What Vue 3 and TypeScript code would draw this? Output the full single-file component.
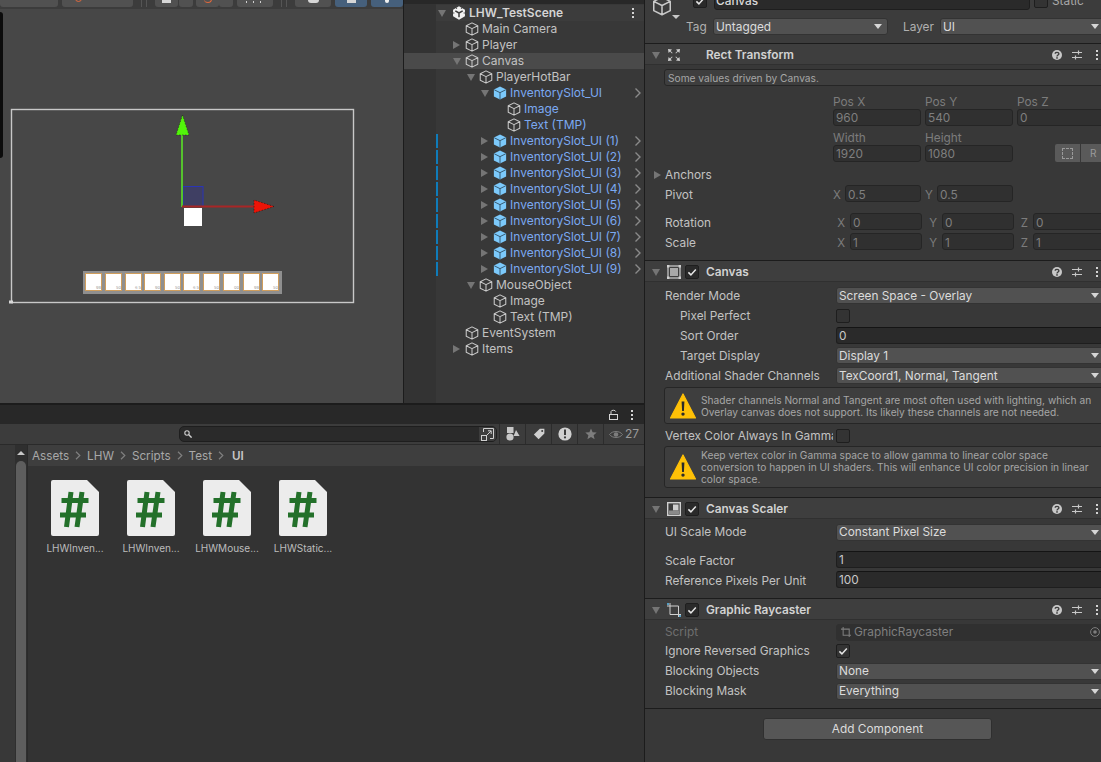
<script setup lang="ts">
interface TreeRow {
  label: string;
  depth: number;
  arrow?: 'down' | 'right';
  prefab?: boolean;
  blue?: boolean;
  bar?: boolean;
  more?: boolean;
  hover?: boolean;
}

const slotRow = (n: number): TreeRow => ({
  label: `InventorySlot_UI (${n})`,
  depth: 2,
  arrow: 'right',
  prefab: true,
  blue: true,
  bar: true,
  more: true,
});

const tree: TreeRow[] = [
  { label: 'Main Camera', depth: 0 },
  { label: 'Player', depth: 0, arrow: 'right' },
  { label: 'Canvas', depth: 0, arrow: 'down', hover: true },
  { label: 'PlayerHotBar', depth: 1, arrow: 'down' },
  { label: 'InventorySlot_UI', depth: 2, arrow: 'down', prefab: true, blue: true, more: true },
  { label: 'Image', depth: 3, blue: true },
  { label: 'Text (TMP)', depth: 3, blue: true },
  ...[1, 2, 3, 4, 5, 6, 7, 8, 9].map(slotRow),
  { label: 'MouseObject', depth: 1, arrow: 'down' },
  { label: 'Image', depth: 2 },
  { label: 'Text (TMP)', depth: 2 },
  { label: 'EventSystem', depth: 0 },
  { label: 'Items', depth: 0, arrow: 'right' },
];

const hotbar = ['99', '50', '6 5', '90', '50', '6 5', '50', '00', '99', '50'];
const slotGaps = [85, 105, 125, 144, 164, 183, 203, 223, 243, 262];
const files = ['LHWInven...', 'LHWInven...', 'LHWMouse...', 'LHWStatic...'];
const crumbs = ['Assets', 'LHW', 'Scripts', 'Test'];
</script>

<template>
  <div class="editor">
    <svg class="defs" width="0" height="0">
      <symbol id="cube" viewBox="0 0 16 16">
        <path d="M8 1 14.6 4.3V11.7L8 15 1.4 11.7V4.3Z M1.4 4.3 8 7.6 14.6 4.3 M8 7.6V15" fill="none" stroke="#c9c9c9" stroke-width="1.2" stroke-linejoin="round" />
      </symbol>
      <symbol id="prefab" viewBox="0 0 16 16">
        <path d="M8 .6 15 4.1V11.9L8 15.4 1 11.9V4.1Z" fill="#7cc9fb" />
        <path d="M1.4 4.3 8 7.6 14.6 4.3 M8 7.6V15" fill="none" stroke="#2d4a5e" stroke-width="1" />
      </symbol>
      <symbol id="warn" viewBox="0 0 26 26">
        <path d="M13 1 25.5 25H.5Z" fill="#ffc107" stroke="#ffc107" stroke-width="1.2" stroke-linejoin="round" />
        <path d="M11.6 8.5h2.8l-.5 9.5h-1.8Z M13 19.4a1.7 1.7 0 1 1 0 3.4 1.7 1.7 0 0 1 0-3.4Z" fill="#2b2b2b" />
      </symbol>
      <symbol id="ask" viewBox="0 0 12 12">
        <circle cx="6" cy="6" r="5" fill="#c8c8c8" />
        <path d="M4.2 4.8C4.2 2.8 7.9 2.9 7.9 4.8 7.9 6 6 6 6 7.5" fill="none" stroke="#3e3e3e" stroke-width="1.4" />
        <rect x="5.2" y="8.2" width="1.6" height="1.5" fill="#3e3e3e" />
      </symbol>
      <symbol id="bang" viewBox="0 0 14 14">
        <circle cx="7" cy="7" r="6.6" fill="#d0d0d0" />
        <path d="M7 2.6V8" stroke="#3c3c3c" stroke-width="2" />
        <circle cx="7" cy="10.4" r="1.1" fill="#3c3c3c" />
      </symbol>
      <symbol id="sliders" viewBox="0 0 12 12">
        <path d="M1 3.5H11 M1 8.5H11 M7.5 1.5V5.5 M4.5 6.5V10.5" stroke="#c8c8c8" stroke-width="1.2" />
      </symbol>
      <symbol id="check" viewBox="0 0 14 14">
        <path d="M3.4 7.4 5.9 9.9 10.8 4.4" fill="none" stroke="#e6e6e6" stroke-width="1.5" />
      </symbol>
    </svg>

    <div class="left">
      <div class="top">
        <section class="scene">
          <div class="scene-bar">
            <span class="tb w58 txt">Center</span>
            <span class="tb w71 gap4 txt">
              <i class="local-ic"></i>Local
            </span>
            <span class="grip"></span>
            <span class="tb w23"><i class="mark m-wide"></i></span><span class="tb w14 gap1"></span>
            <span class="tb w23 gap3"><i class="mark m-arc"></i></span><span class="tb w14"></span>
            <span class="tb w36 gap4"><i class="mark m-ticks"></i></span>
            <span class="grip"></span>
            <span class="tb w36"><i class="mark m-orb"></i></span>
            <span class="tb w32 gap4 on"><i class="mark m-wide"></i></span>
            <span class="tb w32 gap4 on"><i class="mark m-dot"></i></span>
          </div>
          <div class="viewport">
            <span class="sliver"></span>
            <svg class="gizmo" width="403" height="394" viewBox="0 9 403 394">
              <rect x="11.5" y="109.5" width="342" height="193" fill="none" stroke="#c8c8c8" stroke-width="1.4" />
              <rect x="9" y="300.5" width="4" height="3" fill="#d8d8d8" />
              <rect x="184" y="208" width="18" height="18" fill="#fff" />
              <rect x="183" y="186.5" width="20" height="20" fill="#3f3f63" stroke="#2a35b5" />
              <path d="M182 207V134" stroke="#55c22d" stroke-width="2" />
              <path d="M182.5 115 176 135H189Z" fill="#52f50a" stroke="#1d3d0a" stroke-width=".6" stroke-dasharray="1.5 1.5" />
              <path d="M182 206.5H256" stroke="#a82626" stroke-width="2" />
              <path d="M274 206.5 254 200V213Z" fill="#ec1407" stroke="#3a0a06" stroke-width=".6" stroke-dasharray="1.5 1.5" />
            </svg>
            <div class="hotbar">
              <div v-for="(t, i) in hotbar" :key="i" class="slot" :style="{ left: slotGaps[i] - 83 + 'px' }">
                <span>{{ t }}</span>
              </div>
            </div>
          </div>
        </section>

        <section class="hierarchy">
          <div class="tree-head">
            <i class="tri down head-tri"></i>
            <svg class="logo" width="14" height="14" viewBox="0 0 16 16">
              <path d="M8 .4 14.8 4.2V11.8L8 15.6 1.2 11.8V4.2Z" fill="#f2f2f2" />
              <path d="M8 8 8 12.8 M8 8 3.8 5.6 M8 8 12.2 5.6" stroke="#3c3c3c" stroke-width="1.7" fill="none" />
              <path d="M.6 8H2.8 M13.2 8H15.4 M4.4 1.6 5.6 3.4 M11.6 1.6 10.4 3.4" stroke="#3c3c3c" stroke-width="1" fill="none" />
            </svg>
            <span class="scene-name">LHW_TestScene</span>
            <span class="dots"><b></b><b></b><b></b></span>
          </div>
          <div
            v-for="(r, i) in tree"
            :key="i"
            class="row"
            :class="{ hover: r.hover }"
          >
            <span class="bar" :class="{ lit: r.bar }"></span>
            <span class="indent" :style="{ width: 13 + r.depth * 14 + 'px' }"></span>
            <span class="slot-arrow"><i v-if="r.arrow" class="tri" :class="r.arrow"></i></span>
            <svg class="node-ic" width="14" height="14"><use :href="r.prefab ? '#prefab' : '#cube'" /></svg>
            <span class="node" :class="{ blue: r.blue }">{{ r.label }}</span>
            <svg v-if="r.more" class="more" width="8" height="12" viewBox="0 0 8 12">
              <path d="M1.5 1.5 6 6 1.5 10.5" fill="none" stroke="#8a8a8a" stroke-width="1.4" />
            </svg>
          </div>
        </section>
      </div>

      <section class="project">
        <div class="project-tabs">
          <svg width="9" height="11" viewBox="0 0 9 11">
            <path d="M2 5V2.6C2 .8 6.6 .8 6.8 2.6" fill="none" stroke="#d6d6d6" />
            <rect x=".5" y="5.5" width="8" height="5" fill="none" stroke="#d6d6d6" />
          </svg>
          <span class="dots"><b></b><b></b><b></b></span>
        </div>
        <div class="project-tools">
          <div class="search">
            <svg width="8" height="8" viewBox="0 0 8 8">
              <circle cx="3" cy="3" r="2.2" fill="none" stroke="#d0d0d0" stroke-width="1.1" />
              <path d="M4.8 4.8 7.6 7.6" stroke="#d0d0d0" stroke-width="1.4" />
            </svg>
            <span class="search-btn">
              <svg width="14" height="14" viewBox="0 0 14 14">
                <path d="M2.5 5V1.5H12.5V11.5H9" fill="none" stroke="#cfcfcf" />
                <rect x=".5" y="8.5" width="5" height="5" fill="none" stroke="#cfcfcf" />
                <path d="M6 8 10 4M7 3.8H10.2V7" fill="none" stroke="#cfcfcf" />
              </svg>
            </span>
          </div>
          <span class="pt-btn">
            <svg width="14" height="14" viewBox="0 0 14 14">
              <rect x="1" y="0" width="6.5" height="6" fill="#c8c8c8" />
              <circle cx="4" cy="10" r="3.6" fill="#c8c8c8" />
              <path d="M10 3 13.6 9H7.6Z" fill="#c8c8c8" />
            </svg>
          </span>
          <span class="pt-btn">
            <svg width="12" height="12" viewBox="0 0 12 12">
              <path d="M6.8 .8H11.4V5.4L5.6 11.2 .9 6.6Z" fill="#cfcfcf" />
              <circle cx="9.2" cy="2.9" r="1" fill="#3c3c3c" />
            </svg>
          </span>
          <span class="pt-btn">
            <svg width="14" height="14"><use href="#bang" /></svg>
          </span>
          <span class="pt-btn">
            <svg width="12" height="12" viewBox="0 0 12 12">
              <path d="M6 .4 7.6 4.2 11.7 4.5 8.6 7.2 9.6 11.3 6 9.1 2.4 11.3 3.4 7.2 .3 4.5 4.4 4.2Z" fill="#7d7d7d" />
            </svg>
          </span>
          <span class="pt-eye">
            <svg width="14" height="9" viewBox="0 0 14 9">
              <path d="M.5 4.5C3.5.5 10.5.5 13.5 4.5 10.5 8.5 3.5 8.5.5 4.5Z" fill="none" stroke="#7d7d7d" />
              <circle cx="7" cy="4.5" r="2.3" fill="#7d7d7d" />
            </svg>
            27
          </span>
        </div>
        <div class="project-body">
          <div class="folders">
            <div class="scroll">
              <i class="scroll-up"></i>
              <span class="scroll-thumb"></span>
            </div>
          </div>
          <div class="assets">
            <div class="crumbs">
              <template v-for="c in crumbs" :key="c">
                <span>{{ c }}</span>
                <svg width="6" height="9" viewBox="0 0 6 9">
                  <path d="M1 .8 4.8 4.5 1 8.2" fill="none" stroke="#7f7f7f" stroke-width="1.2" />
                </svg>
              </template>
              <b>UI</b>
            </div>
            <div class="file-grid">
              <div v-for="(f, i) in files" :key="i" class="file">
                <svg width="48" height="56" viewBox="0 0 48 56">
                  <path d="M2 0H36L48 12V54a2 2 0 0 1-2 2H2a2 2 0 0 1-2-2V2A2 2 0 0 1 2 0Z" fill="#ececec" />
                  <path d="M20 12 15.5 47 M31 12 26 47 M10.5 20.5H37.5 M9 35H35" stroke="#23702a" stroke-width="5" fill="none" />
                </svg>
                <span>{{ f }}</span>
              </div>
            </div>
          </div>
        </div>
      </section>
    </div>

    <aside class="inspector">
      <div class="obj-head">
        <div class="name-row">
          <span class="check"><svg width="14" height="14"><use href="#check" /></svg></span>
          <span class="name-field">Canvas</span>
          <span class="check plain"></span>
          <span class="static">Static</span>
        </div>
        <svg class="obj-cube" width="20" height="20"><use href="#cube" /></svg>
        <i class="tri down obj-tri"></i>
        <div class="tag-row">
          <label>Tag</label>
          <span class="drop tag">Untagged<i class="tri down white"></i></span>
          <label class="layer">Layer</label>
          <span class="drop layer-drop">UI<i class="tri down white"></i></span>
        </div>
      </div>

      <div class="section rect">
        <div class="comp-head">
          <i class="tri down"></i>
          <svg class="comp-ic" width="14" height="14" viewBox="0 0 14 14">
            <path d="M1 1 5 1.6 3.6 3 5.6 5 5 5.6 3 3.6 1.6 5Z M13 1 12.4 5 11 3.6 9 5.6 8.4 5 10.4 3 9 1.6Z M1 13 1.6 9 3 10.4 5 8.4 5.6 9 3.6 11 5 12.4Z M13 13 9 12.4 10.4 11 8.4 9 9 8.4 11 10.4 12.4 9Z" fill="#d0d0d0" />
          </svg>
          <span class="no-check"></span>
          <span class="comp-name">Rect Transform</span>
          <span class="comp-tools">
            <svg width="12" height="12"><use href="#ask" /></svg>
            <svg class="sliders" width="12" height="12"><use href="#sliders" /></svg>
            <span class="dots"><b></b><b></b><b></b></span>
          </span>
        </div>
        <div class="help thin">Some values driven by Canvas.</div>
        <div class="trio heads"><span>Pos X</span><span>Pos Y</span><span>Pos Z</span></div>
        <div class="trio"><span class="f dim">960</span><span class="f dim">540</span><span class="f dim">0</span></div>
        <div class="trio heads mt3"><span>Width</span><span>Height</span><span></span></div>
        <div class="trio">
          <span class="f dim">1920</span><span class="f dim">1080</span>
          <span class="blueprint"><i class="bp-box"></i><i class="bp-r">R</i></span>
        </div>
        <div class="prop anchors"><i class="tri right"></i><label class="flush">Anchors</label></div>
        <div class="prop pivot">
          <label>Pivot</label>
          <div class="pair">
            <span class="ax">X</span><span class="f dim">0.5</span>
            <span class="ax">Y</span><span class="f dim">0.5</span>
          </div>
        </div>
        <div class="prop rot">
          <label>Rotation</label>
          <div class="xyz">
            <span class="ax">X</span><span class="f dim">0</span>
            <span class="ax">Y</span><span class="f dim">0</span>
            <span class="ax">Z</span><span class="f dim">0</span>
          </div>
        </div>
        <div class="prop">
          <label>Scale</label>
          <div class="xyz">
            <span class="ax">X</span><span class="f dim">1</span>
            <span class="ax">Y</span><span class="f dim">1</span>
            <span class="ax">Z</span><span class="f dim">1</span>
          </div>
        </div>
      </div>

      <div class="section canvas">
        <div class="comp-head">
          <i class="tri down"></i>
          <svg class="comp-ic" width="14" height="14" viewBox="0 0 14 14">
            <rect x="1" y="1" width="12" height="12" fill="none" stroke="#d0d0d0" stroke-width="1.2" />
            <rect x="3" y="3" width="8" height="8" fill="#a8a8a8" />
            <path d="M0 0H2.4V2.4H0Z M11.6 0H14V2.4H11.6Z M0 11.6H2.4V14H0Z M11.6 11.6H14V14H11.6Z" fill="#d0d0d0" />
          </svg>
          <span class="check"><svg width="14" height="14"><use href="#check" /></svg></span>
          <span class="comp-name">Canvas</span>
          <span class="comp-tools">
            <svg width="12" height="12"><use href="#ask" /></svg>
            <svg class="sliders" width="12" height="12"><use href="#sliders" /></svg>
            <span class="dots"><b></b><b></b><b></b></span>
          </span>
        </div>
        <div class="prop"><label>Render Mode</label><span class="drop">Screen Space - Overlay<i class="tri down white"></i></span></div>
        <div class="prop"><label class="sub">Pixel Perfect</label><span class="check plain"></span></div>
        <div class="prop"><label class="sub">Sort Order</label><span class="f val">0</span></div>
        <div class="prop"><label class="sub">Target Display</label><span class="drop">Display 1<i class="tri down white"></i></span></div>
        <div class="prop"><label>Additional Shader Channels</label><span class="drop">TexCoord1, Normal, Tangent<i class="tri down white"></i></span></div>
        <div class="help warn short">
          <svg width="26" height="26"><use href="#warn" /></svg>
          <p>Shader channels Normal and Tangent are most often used with lighting, which an<br />Overlay canvas does not support. Its likely these channels are not needed.</p>
        </div>
        <div class="prop vertex"><label>Vertex Color Always In Gamma</label><span class="check plain"></span></div>
        <div class="help warn tall">
          <svg width="26" height="26"><use href="#warn" /></svg>
          <p>Keep vertex color in Gamma space to allow gamma to linear color space<br />conversion to happen in UI shaders. This will enhance UI color precision in linear<br />color space.</p>
        </div>
      </div>

      <div class="section scaler">
        <div class="comp-head">
          <i class="tri down"></i>
          <svg class="comp-ic" width="14" height="14" viewBox="0 0 14 14">
            <rect x=".7" y=".7" width="12.6" height="12.6" fill="none" stroke="#d0d0d0" stroke-width="1.4" />
            <rect x="6" y="2.5" width="5.5" height="6" fill="#d0d0d0" />
            <rect x="2" y="8.5" width="10" height="3.5" fill="#8a8a8a" />
          </svg>
          <span class="check"><svg width="14" height="14"><use href="#check" /></svg></span>
          <span class="comp-name">Canvas Scaler</span>
          <span class="comp-tools">
            <svg width="12" height="12"><use href="#ask" /></svg>
            <svg class="sliders" width="12" height="12"><use href="#sliders" /></svg>
            <span class="dots"><b></b><b></b><b></b></span>
          </span>
        </div>
        <div class="prop"><label>UI Scale Mode</label><span class="drop">Constant Pixel Size<i class="tri down white"></i></span></div>
        <div class="prop factor"><label>Scale Factor</label><span class="f val">1</span></div>
        <div class="prop"><label>Reference Pixels Per Unit</label><span class="f val">100</span></div>
      </div>

      <div class="section raycaster">
        <div class="comp-head">
          <i class="tri down"></i>
          <svg class="comp-ic" width="14" height="14" viewBox="0 0 14 14">
            <path d="M3 0V11.5H14 M0 3H11.5V14" fill="none" stroke="#d0d0d0" stroke-width="1" />
            <circle cx="1" cy="1" r="1" fill="#5ec1f2" />
            <circle cx="13" cy="13" r="1" fill="#5ec1f2" />
          </svg>
          <span class="check"><svg width="14" height="14"><use href="#check" /></svg></span>
          <span class="comp-name">Graphic Raycaster</span>
          <span class="comp-tools">
            <svg width="12" height="12"><use href="#ask" /></svg>
            <svg class="sliders" width="12" height="12"><use href="#sliders" /></svg>
            <span class="dots"><b></b><b></b><b></b></span>
          </span>
        </div>
        <div class="prop script">
          <label class="off">Script</label>
          <span class="f script-f">
            <svg width="10" height="10" viewBox="0 0 14 14">
              <path d="M3 0V11.5H14 M0 3H11.5V14" fill="none" stroke="#7d7d7d" stroke-width="1.5" />
            </svg>
            GraphicRaycaster
            <svg class="target" width="10" height="10" viewBox="0 0 10 10">
              <circle cx="5" cy="5" r="4.4" fill="none" stroke="#7d7d7d" />
              <circle cx="5" cy="5" r="1.8" fill="#7d7d7d" />
            </svg>
          </span>
        </div>
        <div class="prop ignore"><label>Ignore Reversed Graphics</label><span class="check plain"><svg width="14" height="14"><use href="#check" /></svg></span></div>
        <div class="prop"><label>Blocking Objects</label><span class="drop">None<i class="tri down white"></i></span></div>
        <div class="prop"><label>Blocking Mask</label><span class="drop">Everything<i class="tri down white"></i></span></div>
      </div>

      <div class="section add">
        <button class="add-btn">Add Component</button>
      </div>
    </aside>
  </div>
</template>

<style scoped>
.editor {
  width: 1101px;
  height: 762px;
  display: flex;
  overflow: hidden;
  background: #383838;
  color: #c2c2c2;
  font-family: Inter, "Liberation Sans", sans-serif;
  font-size: 12px;
  line-height: 16px;
}
.defs {
  position: absolute;
}
.left {
  width: 645px;
  flex: none;
  display: flex;
  flex-direction: column;
}
.top {
  height: 403px;
  flex: none;
  display: flex;
}

/* scene */
.scene {
  width: 403px;
  flex: none;
  display: flex;
  flex-direction: column;
}
.scene-bar {
  height: 9px;
  flex: none;
  display: flex;
  align-items: flex-end;
  padding-bottom: 2px;
  background: #3c3c3c;
  overflow: hidden;
  box-sizing: border-box;
}
.tb {
  height: 18px;
  flex: none;
  display: flex;
  align-items: flex-end;
  justify-content: center;
  padding-bottom: 4px;
  box-sizing: border-box;
  background: #515151;
  border-radius: 0 0 3px 3px;
  color: #c8c8c8;
  line-height: 14px;
}
.tb.txt {
  justify-content: flex-start;
  padding-left: 5px;
  padding-bottom: 5px;
}
.tb.on {
  background: #46607c;
}
.mark {
  display: block;
  background: #d6d6d6;
}
.m-wide {
  width: 9px;
  height: 3px;
}
.m-arc {
  width: 7px;
  height: 3px;
  background: none;
  border-bottom: 1px solid #e0683c;
  border-right: 1px solid #e0683c;
  border-radius: 0 0 4px 4px;
}
.m-ticks {
  width: 18px;
  height: 2px;
  background: repeating-linear-gradient(90deg, #cfcfcf 0 1px, transparent 1px 7px);
}
.m-orb {
  width: 11px;
  height: 3px;
  border-radius: 0 0 6px 6px;
}
.m-dot {
  width: 4px;
  height: 3px;
  border-radius: 0 0 3px 3px;
  background: #f0f0f0;
}
.w58 { width: 58px; }
.w71 { width: 71px; }
.w23 { width: 23px; }
.w14 { width: 14px; }
.w36 { width: 36px; }
.w32 { width: 32px; }
.gap4 { margin-left: 4px; }
.gap3 { margin-left: 3px; }
.gap1 { margin-left: 1px; }
.grip {
  width: 4px;
  height: 7px;
  margin: 0 8px 0 8px;
  flex: none;
  border-left: 1px solid #555;
  border-right: 1px solid #555;
}
.local-ic {
  width: 5px;
  height: 5px;
  margin: 0 12px 0 8px;
  align-self: flex-end;
  border: 1px solid #e0683c;
  border-radius: 50%;
}
.viewport {
  flex: 1;
  position: relative;
  background: #474747;
}
.sliver {
  position: absolute;
  left: 0;
  top: 3px;
  width: 3px;
  height: 146px;
  background: #0c0c0c;
  border-radius: 0 3px 3px 0;
}
.gizmo {
  position: absolute;
  left: 0;
  top: 0;
}
.hotbar {
  position: absolute;
  left: 83px;
  top: 262px;
  width: 199px;
  height: 23px;
  background: #8f8f8f;
}
.slot {
  position: absolute;
  top: 2px;
  width: 17px;
  height: 18px;
  box-sizing: border-box;
  background: #fff;
  border: 1px solid #cf9d5c;
  text-align: right;
}
.slot span {
  position: absolute;
  right: 0;
  bottom: 0;
  color: #999;
  font-size: 4px;
  line-height: 5px;
}

/* hierarchy */
.hierarchy {
  flex: 1;
  background: linear-gradient(90deg, #333 32px, #383838 32px);
  border-left: 1px solid #1c1c1c;
  border-right: 1px solid #1c1c1c;
  padding-top: 5px;
  position: relative;
  min-width: 0;
}
.hierarchy::before {
  content: "";
  position: absolute;
  left: 0;
  right: 0;
  top: 0;
  height: 4px;
  background: #282828;
}
.tree-head {
  height: 16px;
  display: flex;
  align-items: center;
  margin-left: 32px;
  padding-left: 2px;
  background: #3c3c3c;
}
.head-tri {
  margin-right: 6px;
}
.logo {
  margin-right: 3px;
  flex: none;
}
.scene-name {
  color: #d4d4d4;
  font-weight: 600;
}
.tree-head .dots {
  margin-left: auto;
  margin-right: 10px;
}
.row {
  height: 16px;
  display: flex;
  align-items: center;
  padding-left: 32px;
}
.row.hover {
  background: #4a4a4a;
}
.bar {
  width: 2px;
  height: 14px;
  flex: none;
}
.bar.lit {
  background: #0f7cba;
}
.indent {
  flex: none;
}
.slot-arrow {
  width: 14px;
  flex: none;
  display: flex;
  justify-content: flex-start;
  padding-left: 2px;
  box-sizing: border-box;
}
.node-ic {
  flex: none;
  margin-right: 3px;
}
.node {
  white-space: nowrap;
}
.node.blue {
  color: #7ba9f1;
}
.more {
  margin-left: auto;
  margin-right: 2px;
}

.tri {
  display: block;
  width: 0;
  height: 0;
  flex: none;
}
.tri.down {
  border-left: 4px solid transparent;
  border-right: 4px solid transparent;
  border-top: 7px solid #757575;
}
.tri.right {
  border-top: 4px solid transparent;
  border-bottom: 4px solid transparent;
  border-left: 7px solid #757575;
}
.tri.white {
  border-left-width: 4px;
  border-right-width: 4px;
  border-top: 5px solid #d6d6d6;
}
.dots {
  display: inline-flex;
  flex-direction: column;
  gap: 2px;
  flex: none;
}
.dots b {
  width: 2px;
  height: 2px;
  background: #d4d4d4;
  display: block;
}

/* project */
.project {
  flex: 1;
  min-height: 0;
  display: flex;
  flex-direction: column;
  border-top: 2px solid #1c1c1c;
  border-right: 1px solid #1c1c1c;
}
.project-tabs {
  height: 19px;
  flex: none;
  background: #282828;
  display: flex;
  align-items: center;
  justify-content: flex-end;
  gap: 13px;
  padding-right: 11px;
}
.project-tools {
  height: 21px;
  flex: none;
  display: flex;
  align-items: stretch;
  padding-left: 179px;
  background: #3c3c3c;
  border-bottom: 1px solid #2a2a2a;
  box-sizing: border-box;
}
.search {
  width: 318px;
  height: 16px;
  margin-top: 2px;
  box-sizing: border-box;
  background: #2a2a2a;
  border: 1px solid #1e1e1e;
  border-radius: 5px;
  display: flex;
  align-items: center;
  padding-left: 4px;
}
.search-btn {
  margin-left: auto;
  width: 17px;
  height: 14px;
  display: flex;
  align-items: center;
  justify-content: center;
  background: #3c3c3c;
  border-radius: 0 4px 4px 0;
}
.pt-btn {
  width: 26px;
  flex: none;
  box-sizing: border-box;
  border-left: 1px solid #2c2c2c;
  display: flex;
  align-items: center;
  justify-content: center;
}
.pt-btn:first-of-type {
  margin-left: 2px;
}
.pt-eye {
  flex: 1;
  border-left: 1px solid #2c2c2c;
  display: flex;
  align-items: center;
  gap: 2px;
  padding-left: 5px;
  color: #9a9a9a;
}
.project-body {
  flex: 1;
  min-height: 0;
  display: flex;
}
.folders {
  width: 28px;
  flex: none;
  background: #383838;
  box-sizing: border-box;
  border-right: 1px solid #2a2a2a;
  padding-left: 15px;
}
.scroll {
  width: 12px;
  height: 100%;
  background: #2f2f2f;
  position: relative;
  padding-top: 16px;
  box-sizing: border-box;
}
.scroll-up {
  position: absolute;
  left: 2px;
  top: 6px;
  border-left: 4px solid transparent;
  border-right: 4px solid transparent;
  border-bottom: 4px solid #c8c8c8;
}
.scroll-thumb {
  display: block;
  width: 10px;
  height: 100%;
  margin-left: 1px;
  background: #5e5e5e;
  border-radius: 5px 5px 0 0;
}
.assets {
  flex: 1;
  background: #333;
  min-width: 0;
}
.crumbs {
  height: 21px;
  box-sizing: border-box;
  background: #3e3e3e;
  display: flex;
  align-items: center;
  padding-left: 4px;
  gap: 6px;
  font-size: 11.7px;
  color: #a8a8a8;
}
.crumbs b {
  color: #c8c8c8;
  font-weight: 600;
  margin-left: 2px;
}
.file-grid {
  display: flex;
  padding: 14px 0 0 9px;
}
.file {
  width: 76px;
  display: flex;
  flex-direction: column;
  align-items: center;
}
.file span {
  font-size: 10px;
  margin-top: 4px;
  color: #bcbcbc;
  white-space: nowrap;
}

/* inspector */
.inspector {
  flex: 1;
  min-width: 0;
  overflow: hidden;
  display: flex;
  flex-direction: column;
  background: #383838;
  font-size: 11.85px;
}
.inspector > * {
  width: 460px;
  flex: none;
}
.obj-head {
  height: 43px;
  position: relative;
  background: #3c3c3c;
}
.name-row {
  height: 19px;
  margin-top: -9px;
  display: flex;
  align-items: center;
  padding-left: 48px;
}
.name-field {
  width: 316px;
  height: 19px;
  box-sizing: border-box;
  margin-left: 7px;
  padding-left: 1px;
  background: #2a2a2a;
  border: 1px solid #1e1e1e;
  border-radius: 3px;
  color: #d8d8d8;
  font-weight: 500;
  line-height: 19px;
}
.name-field + .check {
  margin-left: 4px;
}
.static {
  margin-left: 4px;
  color: #a8a8a8;
}
.obj-cube {
  position: absolute;
  left: 7px;
  top: -4px;
}
.obj-tri {
  position: absolute;
  left: 27px;
  top: 15px;
  border-left-width: 4px !important;
  border-right-width: 4px !important;
  border-top: 4px solid #c8c8c8 !important;
}
.tag-row {
  margin-top: 8px;
  height: 17px;
  display: flex;
  align-items: center;
  padding-left: 41px;
}
.tag-row label {
  width: 27px;
  flex: none;
  color: #b0b0b0;
}
.tag-row .layer {
  width: 37px;
  margin-left: 15px;
}
.drop {
  flex: 1;
  min-width: 0;
  height: 17px;
  box-sizing: border-box;
  padding: 0 5px 0 2px;
  background: #515151;
  border: 1px solid #333;
  border-radius: 3px;
  color: #dcdcdc;
  display: flex;
  align-items: center;
  justify-content: space-between;
  line-height: 14px;
}
.canvas .drop,
.canvas .f.val {
  margin-top: -1px;
}
.tag-row .tag {
  flex: 0 0 175px;
}
.tag-row .layer-drop {
  flex: 0 0 165px;
}
.section {
  border-top: 1px solid #1c1c1c;
  box-sizing: border-box;
  padding-left: 20px;
}
.comp-head {
  height: 21px;
  margin-left: -20px;
  padding: 2px 0 0 7px;
  display: flex;
  align-items: center;
  background: #3e3e3e;
  border-bottom: 1px solid #303030;
  box-sizing: border-box;
  position: relative;
}
.comp-ic {
  margin-left: 7px;
  flex: none;
}
.comp-head .check,
.no-check {
  margin-left: 4px;
}
.no-check {
  width: 14px;
  flex: none;
}
.comp-name {
  margin-left: 7px;
  color: #d2d2d2;
  font-weight: 600;
}
.comp-tools {
  position: absolute;
  left: 406px;
  display: flex;
  align-items: center;
  gap: 8px;
}
.sliders {
  margin-right: 5px;
}
.check {
  width: 14px;
  height: 14px;
  flex: none;
  box-sizing: border-box;
  background: #2a2a2a;
  border: 1px solid #1e1e1e;
  border-radius: 2px;
  display: flex;
  align-items: center;
  justify-content: center;
}
.check svg {
  flex: none;
}
.check.plain {
  background: #333;
}
.help {
  width: 441px;
  box-sizing: border-box;
  background: #3e3e3e;
  border: 1px solid #262626;
  border-radius: 3px;
  color: #a6a6a6;
  font-size: 10.2px;
  line-height: 12px;
}
.help.thin {
  height: 17px;
  margin-left: -1px;
  margin-top: 4px;
  padding-left: 3px;
  line-height: 16px;
}
.help.warn {
  margin-left: -1px;
  display: flex;
  align-items: center;
  padding-left: 5px;
}
.help.warn svg {
  flex: none;
  margin-right: 5px;
}
.help.warn p {
  margin: 0;
  white-space: nowrap;
}
.help.short {
  height: 37px;
  margin-top: 1px;
}
.help.tall {
  height: 42px;
}
.trio {
  width: 272px;
  margin-left: 168px;
  display: grid;
  grid-template-columns: 88px 88px 88px;
  column-gap: 4px;
  height: 17px;
}
.trio .f {
  line-height: 17px;
}
.trio.heads {
  margin-top: 7px;
  height: 16px;
  line-height: 18px;
  color: #7c7c7c;
}
.trio.mt3 {
  margin-top: 3px;
}
.f {
  height: 17px;
  min-width: 0;
  box-sizing: border-box;
  padding-left: 2px;
  background: #2a2a2a;
  border: 1px solid #1e1e1e;
  border-radius: 3px;
  line-height: 16px;
  color: #c8c8c8;
}
.f.dim {
  background: #303030;
  border-color: #252525;
  color: #7f7f7f;
}
.f.val {
  flex: 1;
  border-top-color: #141414;
}
.blueprint {
  margin-left: 38px;
  width: 60px;
  height: 18px;
  margin-top: -1px;
  background: #5a5a5a;
  border-radius: 2px;
  display: flex;
  align-items: center;
}
.bp-box {
  width: 9px;
  height: 9px;
  margin: 0 7px;
  border: 1px dashed #9a9a9a;
  flex: none;
}
.bp-r {
  border-left: 1px solid #383838;
  height: 18px;
  padding-left: 9px;
  font-style: normal;
  font-size: 10px;
  line-height: 18px;
  color: #9a9a9a;
}
.prop {
  height: 20px;
  display: flex;
  align-items: center;
}
.prop > label {
  width: 171px;
  flex: none;
  white-space: nowrap;
  overflow: hidden;
}
.prop > label.sub {
  padding-left: 15px;
  box-sizing: border-box;
}
.prop > label.off {
  color: #6f6f6f;
}
.anchors {
  margin-top: 3px;
  margin-left: -11px;
  gap: 4px;
}
.pair,
.xyz {
  display: grid;
  align-items: center;
  margin: -3px 0 0 -3px;
  color: #7c7c7c;
}
.pair .f,
.xyz .f {
  line-height: 18px;
}
.pair {
  grid-template-columns: 12px 76px 16px 76px;
}
.pair .ax:nth-child(3) {
  margin-left: 4px;
}
.xyz {
  grid-template-columns: 17px 72px 20px 72px 19px 72px;
}
.ax {
  font-size: 11.5px;
  margin-top: 3px;
}
.xyz .ax {
  text-align: right;
  padding-right: 5px;
}
.pivot {
  margin-bottom: 8px;
}
.rect {
  height: 217px;
}
.canvas {
  height: 237px;
}
.canvas .comp-head {
  margin-bottom: 4px;
}
.vertex {
  margin-top: 2px;
}
.vertex > label {
  width: 168px;
  margin-right: 3px;
}
.scaler {
  height: 101px;
}
.scaler .comp-head {
  margin-bottom: 3px;
}
.scaler .f.val {
  margin-top: -3px;
}
.factor {
  margin-top: 9px;
}
.raycaster {
  height: 110px;
}
.raycaster .comp-head {
  margin-bottom: 3px;
}
.script {
  height: 18px;
}
.ignore {
  height: 19px;
  margin-bottom: 1px;
}
.script-f {
  flex: 1;
  display: flex;
  align-items: center;
  gap: 3px;
  color: #7f7f7f;
  background: #303030;
  border-color: #303030;
  padding-left: 4px;
  position: relative;
}
.target {
  position: absolute;
  left: 253px;
}
.add {
  padding: 9px 0 0 118px;
  flex: 1;
}
.add-btn {
  width: 229px;
  height: 22px;
  background: #565656;
  border: 1px solid #2f2f2f;
  border-radius: 3px;
  color: #dcdcdc;
  font: inherit;
  padding: 0;
}
</style>

<style>
html,
body {
  background: #383838;
  overflow: hidden;
}
</style>
